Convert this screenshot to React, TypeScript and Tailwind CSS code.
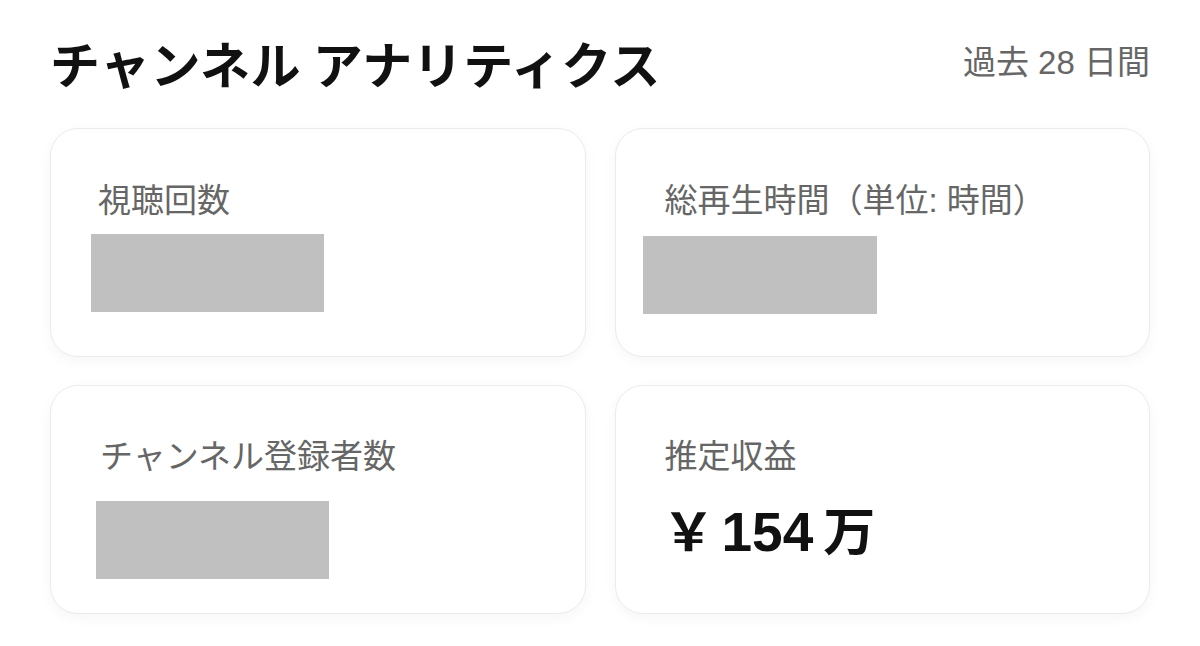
import React from "react";

const font = { fontFamily: '"Liberation Sans", "Noto Sans CJK JP", sans-serif' };
const cjk = { fontFamily: '"Noto Sans CJK JP", sans-serif' };

function Card({ children }: { children: React.ReactNode }) {
  return (
    <div className="h-[229px] rounded-[28px] border border-[#ebebeb] bg-white shadow-[0_4px_14px_rgba(0,0,0,0.04)]">
      {children}
    </div>
  );
}

export default function App() {
  return (
    <div className="w-[1200px] h-[646px] bg-white overflow-hidden px-[50px]" style={font}>
      <div className="h-[128px] flex items-center justify-between pb-[4px]">
        <h1 className="text-[50px] leading-[50px] font-bold text-[#111] tracking-[0.5px]" style={cjk}>
          チャンネル アナリティクス
        </h1>
        <div className="text-[33px] leading-[33px] text-[#666]">過去 28 日間</div>
      </div>
      <div className="grid grid-cols-2 gap-x-[29px] gap-y-[28px]">
        <Card>
          <div className="pt-[55px] pl-[47px] text-[33px] leading-[33px] text-[#666]">視聴回数</div>
          <div className="mt-[17px] ml-[40px] w-[233px] h-[78px] bg-[#c0c0c0]" />
        </Card>
        <Card>
          <div className="pt-[55px] pl-[49px] text-[33px] leading-[33px] text-[#666]">総再生時間（単位: 時間）</div>
          <div className="mt-[19px] ml-[27px] w-[234px] h-[78px] bg-[#c0c0c0]" />
        </Card>
        <Card>
          <div className="pt-[54px] pl-[49px] text-[33px] leading-[33px] text-[#666]">チャンネル登録者数</div>
          <div className="mt-[28px] ml-[45px] w-[233px] h-[78px] bg-[#c0c0c0]" />
        </Card>
        <Card>
          <div className="pt-[54px] pl-[49px] text-[33px] leading-[33px] text-[#666]">推定収益</div>
          <div className="mt-[30px] pl-[47px] flex items-baseline text-[52px] leading-[52px] font-bold text-[#111]">
            <span style={cjk}>￥</span>
            <span className="text-[55px] ml-[7px] mr-[10px]">154</span>
            <span style={cjk}>万</span>
          </div>
        </Card>
      </div>
    </div>
  );
}
